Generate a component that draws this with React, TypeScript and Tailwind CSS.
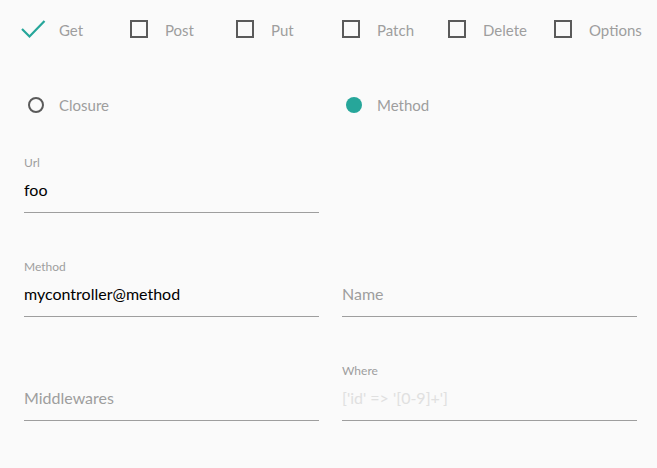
import React from 'react';

const methods = ['Get', 'Post', 'Put', 'Patch', 'Delete', 'Options'];

const font = { fontFamily: '"Segoe UI", Lato, "Noto Sans", sans-serif' };

const CheckItem: React.FC<{ label: string; checked?: boolean }> = ({ label, checked }) => (
  <label className="flex w-[106px] shrink-0 items-center">
    <span className="relative flex h-[18px] w-[35px] shrink-0 items-center">
      {checked ? (
        <svg width="26" height="22" viewBox="0 0 26 22" className="absolute -left-[3px] -top-[1px]">
          <path d="M1 10 L8.5 17.5 L23.5 2" fill="none" stroke="#26a69a" strokeWidth="2.2" />
        </svg>
      ) : (
        <span className="h-[18px] w-[18px] border-2 border-[#5a5a5a]" />
      )}
    </span>
    <span className="whitespace-nowrap pt-[2px] text-[15px] leading-[18px] text-[#9e9e9e]">{label}</span>
  </label>
);

const RadioItem: React.FC<{ label: string; checked?: boolean }> = ({ label, checked }) => (
  <label className="flex items-center">
    <span className="flex w-[35px] shrink-0 items-center pl-1">
      {checked ? (
        <span className="h-4 w-4 rounded-full bg-[#26a69a]" />
      ) : (
        <span className="h-4 w-4 rounded-full border-2 border-[#5a5a5a]" />
      )}
    </span>
    <span className="text-[15px] leading-[18px] text-[#9e9e9e]">{label}</span>
  </label>
);

const Field: React.FC<{ label?: string; value?: string; placeholder?: string; faint?: boolean }> = ({
  label,
  value,
  placeholder,
  faint,
}) => (
  <div className="flex flex-col">
    <div className="h-4 text-xs leading-4 text-[#9e9e9e]">{label}</div>
    <input
      readOnly
      defaultValue={value}
      placeholder={placeholder}
      className={`h-[42px] w-full border-b border-[#9e9e9e] bg-transparent pb-1 text-base text-black outline-none ${
        faint ? 'placeholder:text-[#e0e0e0]' : 'placeholder:text-[#9e9e9e]'
      }`}
      style={font}
    />
  </div>
);

export default function App() {
  return (
    <div className="min-h-screen overflow-hidden bg-[#fafafa] pl-6 pr-5 pt-5" style={font}>
      <div className="flex h-[18px] items-center">
        {methods.map((m, i) => (
          <CheckItem key={m} label={m} checked={i === 0} />
        ))}
      </div>

      <div className="mt-[58px] grid h-[18px] grid-cols-2 gap-x-[23px]">
        <RadioItem label="Closure" />
        <RadioItem label="Method" checked />
      </div>

      <div className="mt-[41px] grid grid-cols-2 gap-x-[23px] gap-y-[46px]">
        <Field label="Url" value="foo" />
        <div />
        <Field label="Method" value="mycontroller@method" />
        <Field placeholder="Name" />
        <Field placeholder="Middlewares" />
        <Field label="Where" placeholder="['id' => '[0-9]+']" faint />
      </div>
    </div>
  );
}
